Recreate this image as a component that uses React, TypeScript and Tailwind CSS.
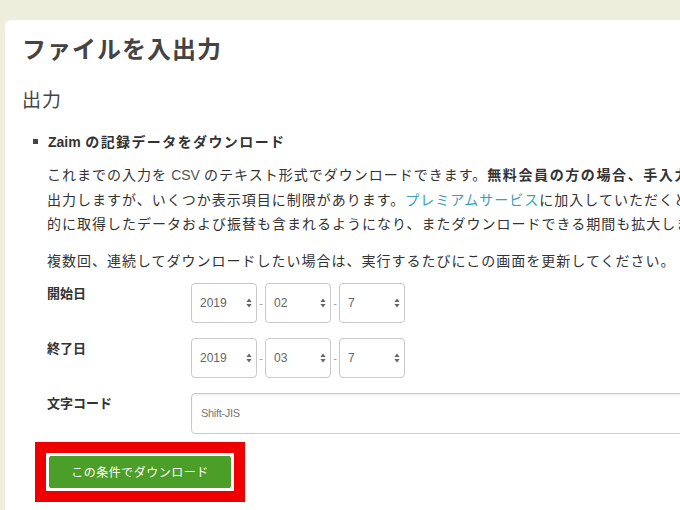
const jp = "font-['Noto_Sans_CJK_JP','Noto_Sans',sans-serif]";
const latin = "font-['Liberation_Sans','Noto_Sans_CJK_JP',sans-serif]";

const Arrows = () => (
  <svg width="6" height="10" viewBox="0 0 6 10" className="shrink-0">
    <path d="M3 0.5 L5.6 4 H0.4 Z" fill="#666" />
    <path d="M3 9.5 L5.6 6 H0.4 Z" fill="#666" />
  </svg>
);

const SelectBox = ({ value }: { value: string }) => (
  <div className="flex h-[40px] w-[66px] items-center justify-between rounded-[4px] border border-[#c9c9c9] bg-white pl-[8px] pr-[4px]">
    <span className={`${latin} text-[12px] text-[#666]`}>{value}</span>
    <Arrows />
  </div>
);

const Dash = () => (
  <span className={`${latin} w-[8px] text-center text-[11px] text-[#999]`}>-</span>
);

const DateRow = ({ label, year, month, day }: { label: string; year: string; month: string; day: string }) => (
  <div className="flex">
    <div className={`${jp} w-[144px] pt-[1px] text-[13px] font-bold leading-[18px] text-[#333]`}>{label}</div>
    <div className="flex items-center">
      <SelectBox value={year} />
      <Dash />
      <SelectBox value={month} />
      <Dash />
      <SelectBox value={day} />
    </div>
  </div>
);

export default function App() {
  return (
    <div className="h-[510px] w-[680px] overflow-hidden bg-[#eeeedc] pl-[5px] pt-[20px]">
      <div className="h-[600px] w-[720px] rounded-tl-[6px] bg-white pl-[17px] pt-[12px] text-[#333]">
        <h1 className={`${jp} text-[24px] font-bold leading-[32px] tracking-[1px] text-[#444]`}>ファイルを入出力</h1>
        <h2 className={`${jp} mt-[21px] text-[19px] leading-[28px] tracking-[1px] text-[#444]`}>出力</h2>

        <div className="mt-[16px] flex items-center">
          <span className="ml-[11px] mr-[10px] h-[5px] w-[5px] bg-[#444]" />
          <span className={`${jp} text-[14px] font-bold leading-[24px] tracking-[1.4px]`}>
            <span className={`${latin} font-bold tracking-normal`}>Zaim</span> の記録データをダウンロード
          </span>
        </div>

        <div className={`${jp} ml-[25px] mt-[8px] whitespace-nowrap text-[14px] leading-[24px] tracking-[1px] text-[#333]`}>
          <p>
            これまでの入力を <span className={`${latin} tracking-normal text-[#555]`}>CSV</span> のテキスト形式でダウンロードできます。
            <b className="tracking-[1.6px]">無料会員の方の場合、手入力したデータのみ</b>
          </p>
          <p>
            出力しますが、いくつか表示項目に制限があります。<span className="text-[#3aa0bb]">プレミアムサービス</span>に加入していただくと、自動
          </p>
          <p>的に取得したデータおよび振替も含まれるようになり、またダウンロードできる期間も拡大します。</p>
          <p className="mt-[13px]">複数回、連続してダウンロードしたい場合は、実行するたびにこの画面を更新してください。</p>
        </div>

        <div className="ml-[25px] mt-[11px] flex flex-col gap-[15px]">
          <DateRow label="開始日" year="2019" month="02" day="7" />
          <DateRow label="終了日" year="2019" month="03" day="7" />
          <div className="flex">
            <div className={`${jp} w-[144px] pt-[1px] text-[13px] font-bold leading-[18px]`}>文字コード</div>
            <div className="flex h-[41px] w-[520px] items-center rounded-[4px] border border-[#c9c9c9] bg-white pl-[9px] shadow-[inset_0_2px_2px_rgba(0,0,0,0.05)]">
              <span className={`${latin} text-[11px] tracking-[-0.3px] text-[#777]`}>Shift-JIS</span>
            </div>
          </div>
        </div>

        <div className="ml-[13px] mt-[8px] w-fit bg-[#ee0000] p-[11px]">
          <div className="bg-white p-[3px]">
            <button className={`${jp} flex h-[32px] w-[182px] items-center justify-center rounded-[2px] bg-[#4b9e28] text-[12px] tracking-[0.5px] text-white`}>
              この条件でダウンロード
            </button>
          </div>
        </div>
      </div>
    </div>
  );
}
